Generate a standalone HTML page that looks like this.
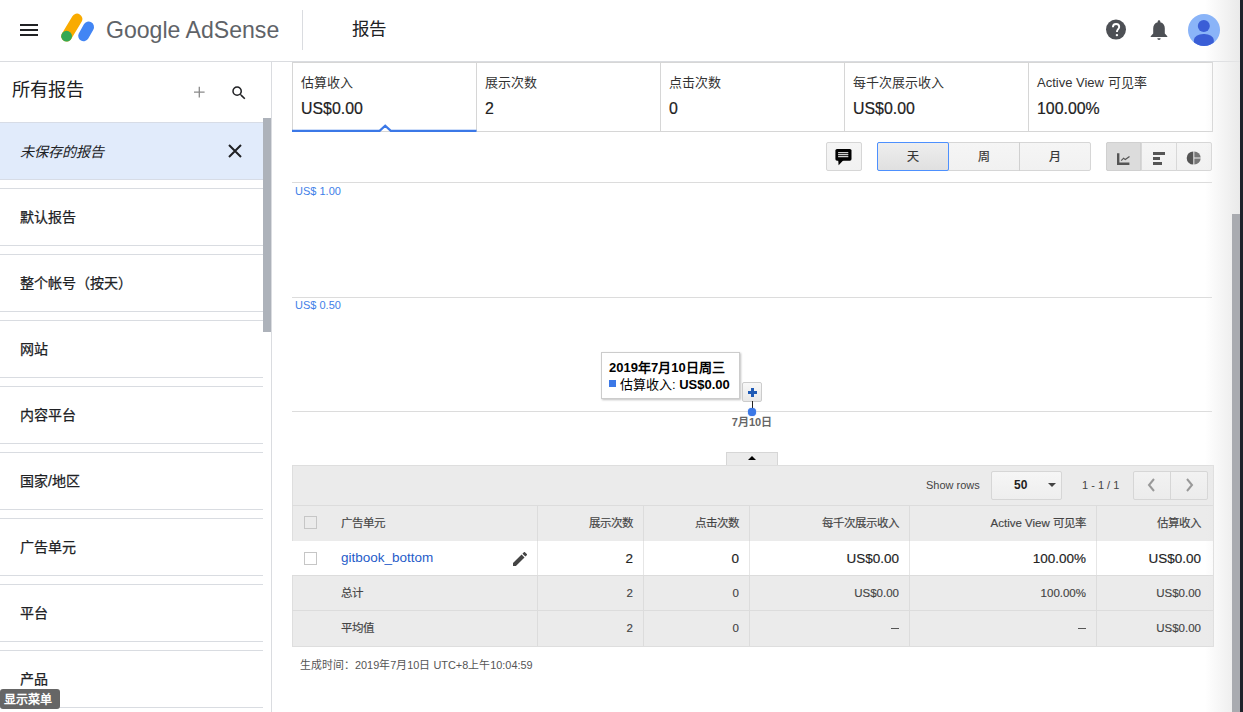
<!DOCTYPE html>
<html lang="zh-CN"><head><meta charset="utf-8">
<style>
*{box-sizing:border-box;margin:0;padding:0}
html,body{width:1243px;height:712px;overflow:hidden;background:#fff;font-family:"Liberation Sans",sans-serif;color:#202124}
.abs{position:absolute}
#hdr{position:absolute;left:0;top:0;width:1243px;height:62px;border-bottom:1px solid #dadce0;background:#fff}
#side{position:absolute;left:0;top:62px;width:272px;height:650px;border-right:1px solid #dadce0;background:#fff;overflow:hidden}
.item{position:absolute;left:0;width:263px;height:58px;border-top:1px solid #d9dce1;border-bottom:1px solid #d9dce1;font-size:14px;line-height:57px;padding-left:20px;color:#202124;-webkit-text-stroke:0.25px #202124}
.btn{border:1px solid #d6d6d6;border-radius:2px;background:linear-gradient(#f5f5f5,#f1f1f1)}
.lbl{font-size:11px;color:#4180e8;white-space:nowrap}
.th{font-size:11.5px;color:#444;white-space:nowrap;-webkit-text-stroke:0.15px #444}
.td{font-size:13.5px;color:#222;white-space:nowrap;-webkit-text-stroke:0.15px #222}
.ts{font-size:11.5px;color:#444;white-space:nowrap;-webkit-text-stroke:0.15px #444}
</style></head><body>
<div id="hdr">
  <div class="abs" style="left:20px;top:24px;width:18px;height:2px;background:#202124"></div>
  <div class="abs" style="left:20px;top:29px;width:18px;height:2px;background:#202124"></div>
  <div class="abs" style="left:20px;top:34px;width:18px;height:2px;background:#202124"></div>
  <svg class="abs" style="left:58px;top:12px" width="40" height="32" viewBox="58 12 40 32">
    <line x1="66.6" y1="36.2" x2="77" y2="19" stroke="#f9ab00" stroke-width="10.8" stroke-linecap="round"/>
    <line x1="83.6" y1="35.8" x2="88.6" y2="27" stroke="#4285f4" stroke-width="10.8" stroke-linecap="round"/>
    <circle cx="66.6" cy="36.2" r="5.4" fill="#34a853"/>
  </svg>
  <div class="abs" style="left:106px;top:16px;font-size:24.5px;color:#5f6368;white-space:nowrap;transform:scaleX(0.942);transform-origin:0 0">Google AdSense</div>
  <div class="abs" style="left:302px;top:10px;width:1px;height:40px;background:#dadce0"></div>
  <div class="abs" style="left:352px;top:14.5px;font-size:17.5px;color:#202124">报告</div>
  <svg class="abs" style="left:1104px;top:18px" width="24" height="24" viewBox="0 0 24 24"><circle cx="12" cy="11.6" r="10" fill="#4d5055"/><path d="M8.9 9.3C8.9 7.3 10.3 6 12.1 6S15.2 7.2 15.2 9C15.2 11.1 12.9 11.3 12.9 14" fill="none" stroke="#fff" stroke-width="1.9"/><circle cx="12.9" cy="17.1" r="1.2" fill="#fff"/></svg>
  <svg class="abs" style="left:1147px;top:18px" width="24" height="24" viewBox="0 0 24 24"><path d="M12 2.3C12.8 2.3 13.3 2.9 13.3 3.6V4.2C16.3 4.8 17.8 7.3 17.8 10.2V15.6L20.3 18.2V19H3.7V18.2L6.2 15.6V10.2C6.2 7.3 7.7 4.8 10.7 4.2V3.6C10.7 2.9 11.2 2.3 12 2.3Z" fill="#4d5055"/><path d="M10.3 20.2H13.7A1.7 1.7 0 0 1 10.3 20.2Z" fill="#4d5055"/></svg>
  <svg class="abs" style="left:1188px;top:14px;z-index:5" width="32" height="32" viewBox="0 0 32 32"><defs><clipPath id="cc"><circle cx="16" cy="16" r="16"/></clipPath></defs><circle cx="16" cy="16" r="16" fill="#8ab4f8"/><g clip-path="url(#cc)"><circle cx="15.8" cy="12" r="6" fill="#3a5ed6"/><rect x="5.9" y="20" width="19.9" height="18" rx="9.5" ry="6" fill="#3a5ed6"/></g></svg>
</div>
<div id="side">
  <div class="abs" style="left:11.7px;top:13px;font-size:18.2px">所有报告</div>
  <svg class="abs" style="left:193px;top:24px" width="13" height="13" viewBox="0 0 13 13"><path d="M6.3 0.8V11.4M1 6.1H11.6" stroke="#8a8a8a" stroke-width="1.3"/></svg>
  <svg class="abs" style="left:230px;top:21.5px" width="18" height="18" viewBox="0 0 24 24"><path fill="#202124" d="M15.5 14h-.79l-.28-.27A6.47 6.47 0 0 0 16 9.5 6.5 6.5 0 1 0 9.5 16c1.61 0 3.09-.59 4.23-1.57l.27.28v.79l5 4.99L20.49 19l-4.99-5zm-6 0C7.01 14 5 11.99 5 9.5S7.01 5 9.5 5 14 7.01 14 9.5 11.99 14 9.5 14z"/></svg>
  <div class="abs" style="left:0;top:60px;width:263px;height:58px;background:#e1ebfb;border-top:1px solid #d7dce6;border-bottom:1px solid #d7dce6"></div>
  <div class="abs" style="left:20px;top:78.6px;font-size:14.2px;font-style:italic">未保存的报告</div>
  <svg class="abs" style="left:228px;top:82px" width="14" height="14" viewBox="0 0 14 14"><path d="M1 1L13 13M13 1L1 13" stroke="#202124" stroke-width="2"/></svg>
  <div class="item" style="top:126px">默认报告</div>
<div class="item" style="top:192px">整个帐号（按天）</div>
<div class="item" style="top:258px">网站</div>
<div class="item" style="top:324px">内容平台</div>
<div class="item" style="top:390px">国家/地区</div>
<div class="item" style="top:456px">广告单元</div>
<div class="item" style="top:522px">平台</div>
<div class="item" style="top:588px">产品</div>

  <div class="abs" style="left:263px;top:56px;width:8px;height:214px;background:#adb2ba"></div>
</div>
<div id="main" class="abs" style="left:272px;top:62px;width:971px;height:650px">
 <div class="abs" style="left:20px;top:0;width:921px;height:70px;border:1px solid #d6d6d6"></div>
 <div class="abs" style="left:29px;top:10px;font-size:13px;color:#333">估算收入</div>
<div class="abs" style="left:29px;top:37.5px;font-size:15.9px;color:#222;-webkit-text-stroke:0.2px #222">US$0.00</div>
<div class="abs" style="left:204px;top:0;width:1px;height:69px;background:#d6d6d6"></div>
<div class="abs" style="left:213px;top:10px;font-size:13px;color:#333">展示次数</div>
<div class="abs" style="left:213px;top:37.5px;font-size:15.9px;color:#222;-webkit-text-stroke:0.2px #222">2</div>
<div class="abs" style="left:388px;top:0;width:1px;height:69px;background:#d6d6d6"></div>
<div class="abs" style="left:397px;top:10px;font-size:13px;color:#333">点击次数</div>
<div class="abs" style="left:397px;top:37.5px;font-size:15.9px;color:#222;-webkit-text-stroke:0.2px #222">0</div>
<div class="abs" style="left:572px;top:0;width:1px;height:69px;background:#d6d6d6"></div>
<div class="abs" style="left:581px;top:10px;font-size:13px;color:#333">每千次展示收入</div>
<div class="abs" style="left:581px;top:37.5px;font-size:15.9px;color:#222;-webkit-text-stroke:0.2px #222">US$0.00</div>
<div class="abs" style="left:756px;top:0;width:1px;height:69px;background:#d6d6d6"></div>
<div class="abs" style="left:765px;top:10px;font-size:13px;color:#333">Active View 可见率</div>
<div class="abs" style="left:765px;top:37.5px;font-size:15.9px;color:#222;-webkit-text-stroke:0.2px #222">100.00%</div>
<svg class="abs" style="left:20px;top:60px" width="185" height="12" viewBox="0 0 185 12"><path d="M0 8.9H87.6L93.2 3.7L98.8 8.9H184.5" fill="none" stroke="#3b78e7" stroke-width="2.2"/></svg>

<div class="abs btn" style="left:554px;top:80px;width:36px;height:29px"></div>
<svg class="abs" style="left:554px;top:80px" width="40" height="32" viewBox="826 142 40 32"><rect x="835.4" y="148.9" width="16.1" height="11.8" rx="1.6" fill="#000"/><path d="M838.2 160H843.6L838.6 165.2Z" fill="#000"/><path d="M838.1 152.7H848.3M838.1 154.7H848.3M838.1 156.7H848.3" stroke="#fff" stroke-width="1"/></svg>
<div class="abs btn" style="left:605px;top:80px;width:214px;height:29px"></div>
<div class="abs" style="left:747px;top:80px;width:1px;height:29px;background:#d0d0d0"></div>
<div class="abs" style="left:605px;top:80px;width:72px;height:29px;border:1px solid #4d90fe;background:linear-gradient(#eee,#e0e0e0);border-radius:2px"></div>
<div class="abs" style="left:605px;top:80px;width:71px;text-align:center;font-size:12px;line-height:31px;color:#333;-webkit-text-stroke:0.2px #333">天</div>
<div class="abs" style="left:676px;top:80px;width:71px;text-align:center;font-size:12px;line-height:31px;color:#333;-webkit-text-stroke:0.2px #333">周</div>
<div class="abs" style="left:747px;top:80px;width:71px;text-align:center;font-size:12px;line-height:31px;color:#333;-webkit-text-stroke:0.2px #333">月</div>
<div class="abs btn" style="left:834px;top:80px;width:106px;height:29px"></div>
<div class="abs" style="left:834px;top:80px;width:35px;height:29px;background:#dcdcdc;border:1px solid #d0d0d0;border-radius:2px 0 0 2px"></div>
<div class="abs" style="left:904px;top:80px;width:1px;height:29px;background:#d8d8d8"></div>
<div class="abs" style="left:869px;top:80px;width:1px;height:29px;background:#d8d8d8"></div>
<svg class="abs" style="left:844px;top:90px" width="16" height="16" viewBox="0 0 16 16"><path d="M2.2 1.3V11.7H13.4" fill="none" stroke="#555" stroke-width="2.4"/><path d="M5.2 8.6L7.6 6.2L9.3 7.6L13.5 4.4" fill="none" stroke="#555" stroke-width="1.2"/></svg>
<div class="abs" style="left:881px;top:90px;width:12px;height:2.6px;background:#555"></div>
<div class="abs" style="left:881px;top:95px;width:6.5px;height:2.5px;background:#555"></div>
<div class="abs" style="left:881px;top:100px;width:9px;height:2.6px;background:#555"></div>
<svg class="abs" style="left:914px;top:88px" width="16" height="16" viewBox="0 0 16 16"><path d="M7.3 1.4A6.6 6.6 0 0 0 7.3 14.6Z" fill="#555"/><path d="M8.3 1.4A6.6 6.6 0 0 1 14.7 7.5H8.3Z" fill="#777"/><path d="M8.3 8.5H14.7A6.6 6.6 0 0 1 8.3 14.6Z" fill="#777"/></svg>
<div class="abs" style="left:20px;top:120px;width:920px;height:1px;background:#dcdcdc"></div>
<div class="abs" style="left:20px;top:235px;width:920px;height:1px;background:#dcdcdc"></div>
<div class="abs" style="left:20px;top:349px;width:920px;height:1px;background:#dcdcdc"></div>
<div class="abs lbl" style="left:23px;top:123px">US$ 1.00</div>
<div class="abs lbl" style="left:23px;top:237px">US$ 0.50</div>
<div class="abs" style="left:329px;top:290px;width:139px;height:47px;border:1px solid #ccc;background:#fff;box-shadow:1px 1px 2px rgba(0,0,0,.25)"></div>
<div class="abs" style="left:337px;top:294.5px;font-size:13px;font-weight:bold;color:#000;white-space:nowrap">2019年7月10日周三</div>
<div class="abs" style="left:337px;top:318px;width:7px;height:7px;background:#3b78e7"></div>
<div class="abs" style="left:348px;top:312px;font-size:13px;color:#000;white-space:nowrap">估算收入: <b>US$0.00</b></div>
<div class="abs" style="left:470px;top:320px;width:20px;height:20px;border:1px solid #ccc;border-radius:2px;background:linear-gradient(#f8f8f8,#e8e8e8)"></div>
<div class="abs" style="left:475.5px;top:328.5px;width:9px;height:3px;background:#1f5ab5"></div>
<div class="abs" style="left:478.5px;top:325.5px;width:3px;height:9px;background:#1f5ab5"></div>
<div class="abs" style="left:480px;top:339px;width:1.2px;height:10px;background:#222"></div>
<div class="abs" style="left:476.3px;top:346.3px;width:7.4px;height:7.4px;border-radius:50%;background:#3b78e7;box-shadow:0 0 1px #3b78e7"></div>
<div class="abs" style="left:450px;top:351px;width:60px;text-align:center;font-size:11px;font-weight:bold;color:#666">7月10日</div>
<div class="abs" style="left:454px;top:390px;width:52px;height:13px;background:#ebebeb;border:1px solid #d6d6d6;border-bottom:none"></div>
<div class="abs" style="left:476px;top:394px;width:0;height:0;border-left:4px solid transparent;border-right:4px solid transparent;border-bottom:4px solid #000"></div>
<div class="abs" style="left:20px;top:403px;width:922px;height:182px;background:#ebebeb;border:1px solid #dedede"></div>
<div class="abs" style="left:654px;top:417px;font-size:11px;color:#444;white-space:nowrap">Show rows</div>
<div class="abs" style="left:719px;top:409px;width:71px;height:29px;border:1px solid #d6d6d6;border-radius:2px;background:linear-gradient(#f6f6f6,#eeeeee)"></div>
<div class="abs" style="left:742px;top:416px;font-size:12px;font-weight:bold;color:#222">50</div>
<div class="abs" style="left:776px;top:421px;width:0;height:0;border-left:4px solid transparent;border-right:4px solid transparent;border-top:4px solid #444"></div>
<div class="abs" style="left:810px;top:417px;font-size:11px;color:#444;white-space:nowrap">1 - 1 / 1</div>
<div class="abs" style="left:861px;top:409px;width:75px;height:29px;border:1px solid #d6d6d6;border-radius:2px;background:linear-gradient(#f2f2f2,#ececec)"></div>
<div class="abs" style="left:898px;top:409px;width:1px;height:29px;background:#d6d6d6"></div>
<svg class="abs" style="left:874px;top:416px" width="12" height="14" viewBox="0 0 12 14"><path d="M8 1L3 7L8 13" fill="none" stroke="#999" stroke-width="2"/></svg>
<svg class="abs" style="left:911px;top:416px" width="12" height="14" viewBox="0 0 12 14"><path d="M4 1L9 7L4 13" fill="none" stroke="#999" stroke-width="2"/></svg>
<div class="abs" style="left:265px;top:443px;width:1px;height:141px;background:#dcdcdc"></div>
<div class="abs" style="left:371px;top:443px;width:1px;height:141px;background:#dcdcdc"></div>
<div class="abs" style="left:477px;top:443px;width:1px;height:141px;background:#dcdcdc"></div>
<div class="abs" style="left:637px;top:443px;width:1px;height:141px;background:#dcdcdc"></div>
<div class="abs" style="left:824px;top:443px;width:1px;height:141px;background:#dcdcdc"></div>
<div class="abs" style="left:20px;top:443px;width:921px;height:1px;background:#dcdcdc"></div>
<div class="abs" style="left:20px;top:479px;width:921px;height:1px;background:#dcdcdc"></div>
<div class="abs" style="left:20px;top:513px;width:921px;height:1px;background:#dcdcdc"></div>
<div class="abs" style="left:20px;top:548px;width:921px;height:1px;background:#dcdcdc"></div>
<div class="abs" style="left:20px;top:479px;width:921px;height:34px;background:#fff"></div>
<div class="abs" style="left:265px;top:479px;width:1px;height:34px;background:#e6e6e6"></div>
<div class="abs" style="left:371px;top:479px;width:1px;height:34px;background:#e6e6e6"></div>
<div class="abs" style="left:477px;top:479px;width:1px;height:34px;background:#e6e6e6"></div>
<div class="abs" style="left:637px;top:479px;width:1px;height:34px;background:#e6e6e6"></div>
<div class="abs" style="left:824px;top:479px;width:1px;height:34px;background:#e6e6e6"></div>
<div class="abs" style="left:32px;top:454px;width:13px;height:13px;border:1px solid #c6c6c6;background:#ebebeb"></div>
<div class="abs" style="left:32px;top:489.5px;width:13px;height:13px;border:1px solid #c6c6c6;background:#fff"></div>
<div class="abs th" style="left:69px;top:452px">广告单元</div>
<div class="abs th" style="right:610px;top:452px">展示次数</div>
<div class="abs th" style="right:504px;top:452px">点击次数</div>
<div class="abs th" style="right:344px;top:452px">每千次展示收入</div>
<div class="abs th" style="right:157px;top:452px">Active View 可见率</div>
<div class="abs th" style="right:42px;top:452px">估算收入</div>
<div class="abs" style="left:69px;top:488px;font-size:13.5px;color:#1f5cc9;white-space:nowrap">gitbook_bottom</div>
<svg class="abs" style="left:241px;top:490px" width="14" height="14" viewBox="3 3 18 18"><path fill="#444" d="M3 17.25V21h3.75L17.81 9.94l-3.75-3.75L3 17.25zM20.71 7.04a1 1 0 0 0 0-1.41l-2.34-2.34a1 1 0 0 0-1.41 0l-1.83 1.83 3.75 3.75 1.83-1.83z"/></svg>
<div class="abs td" style="right:610px;top:489px">2</div>
<div class="abs td" style="right:504px;top:489px">0</div>
<div class="abs td" style="right:344px;top:489px">US$0.00</div>
<div class="abs td" style="right:157px;top:489px">100.00%</div>
<div class="abs td" style="right:42px;top:489px">US$0.00</div>
<div class="abs th" style="left:69px;top:522px">总计</div>
<div class="abs ts" style="right:610px;top:525px">2</div>
<div class="abs ts" style="right:504px;top:525px">0</div>
<div class="abs ts" style="right:344px;top:525px">US$0.00</div>
<div class="abs ts" style="right:157px;top:525px">100.00%</div>
<div class="abs ts" style="right:42px;top:525px">US$0.00</div>
<div class="abs th" style="left:69px;top:557px">平均值</div>
<div class="abs ts" style="right:610px;top:560px">2</div>
<div class="abs ts" style="right:504px;top:560px">0</div>
<div class="abs" style="right:344px;top:566px;width:8px;height:1.4px;background:#555"></div>
<div class="abs" style="right:157px;top:566px;width:8px;height:1.4px;background:#555"></div>
<div class="abs ts" style="right:42px;top:560px">US$0.00</div>
<div class="abs" style="left:28px;top:593.5px;font-size:10.9px;color:#555;white-space:nowrap">生成时间：2019年7月10日 UTC+8上午10:04:59</div>
</div>
<div class="abs" style="left:1205px;top:0;width:35px;height:712px;z-index:4;background:linear-gradient(90deg,rgba(230,230,230,0),rgba(230,230,230,.85))"></div>
<div class="abs" style="z-index:6;left:1232px;top:214px;width:8px;height:498px;background:#a9abb0"></div>
<div class="abs" style="z-index:6;left:1240px;top:0;width:3px;height:712px;background:#1e222a"></div>
<div class="abs" style="left:0;top:689px;width:60px;height:20px;background:#666;border-radius:3px;color:#fff;font-size:12px;font-weight:bold;line-height:22px;padding-left:4px;white-space:nowrap">显示菜单</div>
</body></html>
